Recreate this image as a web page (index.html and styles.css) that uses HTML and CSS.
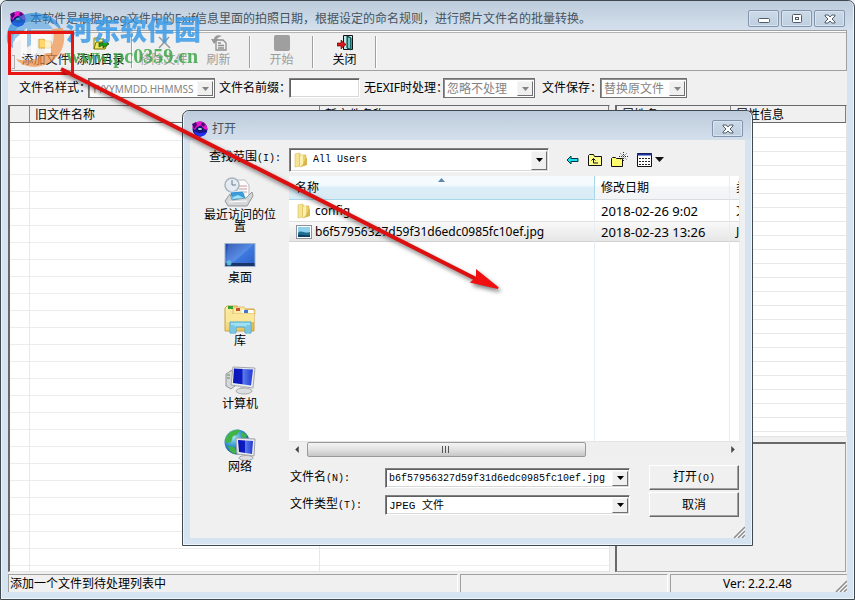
FILE: index.html
```html
<!DOCTYPE html>
<html lang="zh-CN">
<head>
<meta charset="utf-8">
<title>照片文件名批量转换</title>
<link rel="stylesheet" href="styles.css">
</head>
<body>
<svg class="defs" aria-hidden="true">
  <defs>
    <linearGradient id="screen" x1="0" y1="0" x2="1" y2="1"><stop offset="0" stop-color="#1c44a8"/><stop offset=".5" stop-color="#3f7be0"/><stop offset="1" stop-color="#2a5fc8"/></linearGradient>
    <linearGradient id="monitor" x1="0" y1="0" x2="1" y2="0"><stop offset="0" stop-color="#0a14b8"/><stop offset=".45" stop-color="#0c1cc0"/><stop offset=".5" stop-color="#5a7ae8"/><stop offset="1" stop-color="#2038d8"/></linearGradient>
    <linearGradient id="yellow" x1="0" y1="0" x2="1" y2="1"><stop offset="0" stop-color="#fdf3b0"/><stop offset="1" stop-color="#e3b94a"/></linearGradient>
    <radialGradient id="globe" cx=".35" cy=".3" r=".8"><stop offset="0" stop-color="#a6e8f4"/><stop offset=".5" stop-color="#2c8ccc"/><stop offset="1" stop-color="#0c3c88"/></radialGradient>
    <symbol id="app" viewBox="0 0 16 16">
      <circle cx="8" cy="8" r="7.500" fill="#1a1690"/>
      <path d="M.5 7C0 3 4 .5 8 .5S15 3 15.500 9L12 8 9 4.500 5 6 3 9z" fill="#ee14c8"/>
      <path d="M0 3l4-2 1 3-3 4zM10 1l3 2-1 3-3-2z" fill="#4a0a78"/>
      <path d="M2 10l4 2 5 0 4-1-2 3-5 2-4-2z" fill="#2430f0"/>
      <path d="M8 5l4 3-4 3-4-3z" fill="#111a5c"/>
      <path d="M6 8h4M8 7v2" stroke="#dff" stroke-width="1.200"/>
    </symbol>
    <symbol id="drop" viewBox="0 0 7 4"><path d="M0 0h7L3.500 4z" fill="currentColor"/></symbol>
    <symbol id="cross" viewBox="0 0 12 10"><path d="M1 1h3.200L6 3 7.800 1H11v1L8 5l3 3v1H7.800L6 7 4.200 9H1V8l3-3-3-3z" fill="#fff" stroke="#4e5b69"/></symbol>
    <symbol id="folder" viewBox="0 0 16 16">
      <path d="M2 2l5-1v13l-5 1z" fill="#f6e493" stroke="#d8bd55" stroke-width=".6"/>
      <path d="M7 3h6v10l-6 2z" fill="#ecd06b" stroke="#cfae45" stroke-width=".6"/>
      <path d="M7 4l3-2v10l-3 3z" fill="#fbf0b2"/><path d="M13 6h1v7l-5 1z" fill="#d9b64f"/>
    </symbol>
    <symbol id="grip" viewBox="0 0 12 12"><path d="M1 12L12 1M5 12l7-7M9 12l3-3" stroke="#8c8c8c" stroke-width="1.500"/><path d="M3 12l9-9M7 12l5-5M11 12l1-1" stroke="#fff"/></symbol>
  </defs>
</svg>

<main class="window">
  <header class="titlebar">
    <svg class="app-icon"><use href="#app"/></svg>
    <h1 class="caption">本软件是根据Jpeg文件中的Exif信息里面的拍照日期，根据设定的命名规则，进行照片文件名的批量转换。</h1>
    <div class="caption-buttons">
      <button class="cap" aria-label="最小化"><svg width="12" height="10" viewBox="0 0 12 10"><rect x=".5" y="4.500" width="11" height="4" rx="1" fill="#fff" stroke="#4e5b69"/></svg></button>
      <button class="cap" aria-label="最大化"><svg width="12" height="10" viewBox="0 0 12 10"><rect x="1.500" y=".5" width="9" height="8" rx="1" fill="#fff" stroke="#4e5b69"/><rect x="4.500" y="3.500" width="3" height="2" fill="#fff" stroke="#4e5b69"/></svg></button>
      <button class="cap" aria-label="关闭窗口"><svg width="12" height="10"><use href="#cross"/></svg></button>
    </div>
  </header>

  <div class="client">
    <nav class="toolbar" aria-label="工具栏">
      <span class="handle"></span>
      <button class="tool faint"><svg viewBox="0 0 16 16"><path d="M1 13V4h5l1 2h6v7z" fill="#ffd76a" stroke="#d9a63a"/></svg>添加文件</button>
      <button class="tool"><svg viewBox="0 0 16 16"><path d="M1 14V3h4l1 1h5v3" fill="#ffffa0" stroke="#8a8000"/><path d="M1 14l2-7h12l-3 7z" fill="#f0e860" stroke="#7a7000"/><path d="M6 8h4V5l6 4-6 4v-3l-4 2z" fill="#1fa01f" stroke="#064a06" stroke-width=".7"/></svg>添加目录</button>
      <span class="rule"></span>
      <button class="tool" disabled><svg viewBox="0 0 16 16"><path d="M3 2l11 11M13 2L3 13" stroke="#9a9a9a" stroke-width="1.500"/></svg>移除文件</button>
      <button class="tool" disabled><svg viewBox="0 0 16 16"><path d="M5 5h7l3 3v7H5zM7 8h3M7 10.500h6M7 13h6" fill="none" stroke="#8f8f8f" stroke-width="1.300"/><path d="M11 1C6-1 3 2 3 4H0l3 5 5-5H6c1-2 3-2 5-3z" fill="#979797"/></svg>刷新</button>
      <span class="rule"></span>
      <button class="tool" disabled><svg viewBox="0 0 16 16"><rect width="16" height="16" rx="2" fill="#9f9f9f"/></svg>开始</button>
      <span class="rule"></span>
      <button class="tool"><svg viewBox="0 0 16 16"><path d="M6.500 .5h9v14h-9z" fill="#bfe6e6" stroke="#111"/><path d="M10 1l4 2v12l-4-2z" fill="#2b8f8f" stroke="#063c3c"/><path d="M12 3v10" stroke="#b9ffff"/><path d="M0 8h4V5l5 4.500L4 14v-3H0z" fill="#e01515" stroke="#500" stroke-width=".6"/></svg>关闭</button>
      <span class="rule"></span>
    </nav>

    <form class="filters">
      <label for="style">文件名样式：</label>
      <span class="combo off"><select id="style" disabled><option>YYYYMMDD.HHMMSS</option></select><i class="arrow"><svg><use href="#drop"/></svg></i></span>
      <label for="prefix">文件名前缀：</label>
      <input id="prefix" class="field" type="text">
      <label for="noexif">无EXIF时处理：</label>
      <span class="combo off"><select id="noexif" disabled><option>忽略不处理</option></select><i class="arrow"><svg><use href="#drop"/></svg></i></span>
      <label for="save">文件保存：</label>
      <span class="combo off"><select id="save" disabled><option>替换原文件</option></select><i class="arrow"><svg><use href="#drop"/></svg></i></span>
    </form>

    <div class="panes">
      <section class="sheet files">
        <table class="grid"><colgroup><col class="c-mark"><col class="c-old"><col></colgroup>
          <thead><tr><th></th><th>旧文件名称</th><th>新文件名称</th></tr></thead></table>
        <div class="lines wide"></div>
      </section>
      <div class="side">
        <section class="sheet props">
          <table class="grid"><colgroup><col class="c-prop"><col></colgroup>
            <thead><tr><th>属性名</th><th>属性信息</th></tr></thead></table>
          <div class="lines tight"></div>
        </section>
        <section class="preview"></section>
      </div>
    </div>

    <footer class="status">
      <span>添加一个文件到待处理列表中</span>
      <span></span>
      <span class="version">Ver: 2.2.2.48<svg class="grip"><use href="#grip"/></svg></span>
    </footer>
  </div>
</main>

<section class="dialog" role="dialog" aria-labelledby="dlg-title">
  <header class="titlebar">
    <svg class="app-icon"><use href="#app"/></svg>
    <h2 class="caption" id="dlg-title">打开</h2>
    <div class="caption-buttons"><button class="cap" aria-label="关闭对话框"><svg width="12" height="10"><use href="#cross"/></svg></button></div>
  </header>
  <div class="dialog-body">
    <div class="lookup">
      <label for="where">查找范围<span class="mono">(I):</span></label>
      <span class="combo tall"><svg class="small-icon"><use href="#folder"/></svg><select id="where" class="mono"><option>All Users</option></select><i class="arrow"><svg><use href="#drop"/></svg></i></span>
      <div class="nav">
        <button aria-label="后退"><svg width="13" height="16" viewBox="0 0 13 16"><path d="M1 8l4-4v2.500h7v3H5V12z" fill="#19e0e8" stroke="#07343c"/></svg></button>
        <button aria-label="向上一级"><svg width="16" height="16" viewBox="0 0 16 16"><path d="M1.500 13.500v-10l1-1h4l1 2h7v9z" fill="#ffff8c" stroke="#111"/><path d="M11 11H6.500V7M4.500 8.500l2-2 2 2" fill="none" stroke="#111"/></svg></button>
        <button aria-label="新建文件夹"><svg width="17" height="16" viewBox="0 0 17 16"><path d="M.5 14.500v-8l1-1h3l1 1h6v8z" fill="#ffff70" stroke="#111"/><path d="M12.500 0v9M8 4.500h9M9.500 1.500l6 6M15.500 1.500l-6 6" stroke="#333" stroke-dasharray="1 1"/></svg></button>
        <button aria-label="查看菜单"><svg width="28" height="16" viewBox="0 0 28 16"><path d="M1.500 1.500h14v13h-14z" fill="#fff" stroke="#111"/><path d="M1 2.500h15" stroke="#1830a0" stroke-width="2"/><path d="M3 6.500h11M3 9.500h11M3 12.500h11" stroke="#222" stroke-dasharray="2 1"/><path d="M19 5h9l-4.500 5z" fill="#111"/></svg></button>
      </div>
    </div>

    <nav class="places" aria-label="位置">
      <button><svg viewBox="0 0 32 32"><path d="M11 3h10l4 5v14H11z" fill="#fbfbfb" stroke="#b9bec4"/><path d="M15 9h8M15 12h8M15 15h8" stroke="#c99"/><circle cx="8" cy="8" r="7" fill="#e4ebf2" stroke="#a8b4bf" stroke-width="1.500"/><path d="M8 3v5h4" fill="none" stroke="#6a7d90"/><path d="M6 15l13-1 3 8-14 3z" fill="#2f8ed0" stroke="#dceaf4"/><path d="M7 20l6-3 8 4-13 4z" fill="#7ed2f0"/><path d="M1 24l5-7 2 6 14-2 6-6 1 4-6 10H4z" fill="#d5d6d8" stroke="#98999b"/><path d="M8 16l11-1 2 6-12 2z" fill="#3c9cd8"/><path d="M9 20l5-2 6 3-11 1z" fill="#9fe2f4"/><path d="M5 25l18-1" stroke="#fff"/></svg>最近访问的位置</button>
      <button><svg viewBox="0 0 32 32"><rect x="1" y="3.500" width="30" height="23" fill="url(#screen)" stroke="#9cb2cf"/><path d="M1.500 23h29v3h-29z" fill="#1c3568"/><circle cx="5" cy="23" r="2.500" fill="#58b9d8"/><path d="M4 4h26L10 22H2z" fill="#fff" opacity=".13"/></svg>桌面</button>
      <button><svg viewBox="0 0 32 32"><path d="M1 28V5l2-2h10l2 3h15v22z" fill="url(#yellow)" stroke="#cfa23c"/><path d="M9 6l2-2h9l2 3h9v4H9z" fill="#fbe9a4" stroke="#d8ae4f" stroke-width=".7"/><path d="M4 3h5v3H4z" fill="#34a334"/><path d="M12 5h4v3h-4z" fill="#c8502c"/><path d="M18 7h11v3H18z" fill="#fff"/><path d="M20 7h4v3h-4z" fill="#3c78c8"/><path d="M2 11h28v8H2z" fill="#fbe79a"/><path d="M6 30V19h21v11h-6v-6h-9v6z" fill="#9fe0f4" stroke="#4aa5cc"/><path d="M8 22v7M10 22v7M23 22v7M25 22v7" stroke="#58aed0"/></svg>库</button>
      <button><svg viewBox="0 0 32 32"><path d="M2 8l6-4 3 16-4 3-5-3z" fill="#d6d8da" stroke="#929598"/><path d="M3 9h3M3 12h3" stroke="#5b8f3b"/><path d="M9 1l22 1-2 20-22-3z" fill="#e9ebed" stroke="#a4a8ac"/><path d="M10 2.500l19 1-2 16-18-2.500z" fill="url(#monitor)"/><path d="M16 20h5l2 4h-6z" fill="#bfc2c6"/><ellipse cx="20" cy="25" rx="8" ry="3" fill="#dcdee0" stroke="#a9acaf"/></svg>计算机</button>
      <button><svg viewBox="0 0 32 32"><circle cx="13" cy="13" r="12.500" fill="url(#globe)"/><path d="M4 5c4-4 9-5 12-4l-3 5-4 1-2 6-6 1c0-4 1-6 3-9zM4 17l6 1 3 5-2 2c-4-1-6-4-7-8zM18 3l5 3-1 3-5-1z" fill="#42b344"/><path d="M12 9l19 1-1 17-17-2z" fill="#e8eaec" stroke="#9fa3a8"/><path d="M14 11l15 1-1 13-13-2z" fill="url(#monitor)"/><ellipse cx="22" cy="29" rx="7" ry="2.500" fill="#dcdee0" stroke="#a4a8ac"/></svg>网络</button>
    </nav>

    <div class="browser">
      <div class="listing">
        <table class="entries">
          <colgroup><col class="c-name"><col class="c-date"><col></colgroup>
          <thead><tr><th class="sorted">名称<svg class="sort" viewBox="0 0 7 4"><path d="M0 4h7L3.500 0z" fill="#5f86a8"/></svg></th><th>修改日期</th><th>类型</th></tr></thead>
          <tbody>
            <tr><td><span class="entry"><svg class="small-icon"><use href="#folder"/></svg>config</span></td><td class="date">2018-02-26 9:02</td><td>文件夹</td></tr>
            <tr class="selected"><td><span class="entry"><svg class="small-icon" viewBox="0 0 16 16"><rect x=".5" y="1.500" width="15" height="13" fill="#fff" stroke="#8b9299"/><path d="M2 3h12v10H2z" fill="#8fd0ee"/><path d="M2 9c3-4 6 1 12-1v5H2z" fill="#1f6f8f"/><path d="M2 11c4-1 7 1 12 0v2H2z" fill="#0d3c66"/></svg>b6f57956327d59f31d6edc0985fc10ef.jpg</span></td><td class="date">2018-02-23 13:26</td><td>JPEG 图像</td></tr>
            <tr class="rest"><td></td><td></td><td></td></tr>
          </tbody>
        </table>
        <div class="scroll">
          <svg viewBox="0 0 4 8"><path d="M4 0v8L0 4z" fill="#444"/></svg>
          <div class="track"><span class="thumb"><i></i><i></i><i></i></span></div>
          <svg viewBox="0 0 4 8"><path d="M0 0v8l4-4z" fill="#444"/></svg>
        </div>
      </div>
      <div class="answer">
        <label for="fname">文件名<span class="mono">(N):</span></label>
        <span class="combo"><input id="fname" class="mono" type="text" value="b6f57956327d59f31d6edc0985fc10ef.jpg"><i class="arrow"><svg><use href="#drop"/></svg></i></span>
        <button class="push">打开<span class="mono">(O)</span></button>
        <label for="ftype">文件类型<span class="mono">(T):</span></label>
        <span class="combo"><select id="ftype" class="mixed"><option>JPEG 文件</option></select><i class="arrow"><svg><use href="#drop"/></svg></i></span>
        <button class="push">取消</button>
      </div>
    </div>
    <svg class="grip"><use href="#grip"/></svg>
  </div>
</section>

<div class="watermark">
  <svg class="mark-logo" viewBox="0 0 60 56">
    <path d="M1 29C-1 12 12 1 28 1c14 0 26 7 28 19C48 9 36 6 26 9 12 12 5 20 7 36 3 34 1 32 1 29z" fill="#1d86dc"/>
    <path d="M57 16c5 20-6 37-28 39-9 0-16-4-19-8 16 4 33-2 37-17 1-5 1-9-1-13z" fill="#f08a3c"/>
    <path d="M5 34C5 20 14 11 28 9c8-1 15 2 19 8H25v16l-8 5V21L8 29z" fill="#3a96e2" opacity=".75"/>
    <path d="M9 27l12-11v28h-6V27l-6 4zM25 21h20v20h-6V27h-8v17h-6z" fill="#fff"/>
  </svg>
  <div class="mark-text"><span class="mark-name">河东软件园</span><span class="mark-url">www.pc0359.cn</span></div>
</div>

<svg class="callout" viewBox="0 0 855 600" width="855" height="600" aria-hidden="true">
  <rect x="9.500" y="32.500" width="63" height="41" fill="none" stroke="#e81414" stroke-width="3"/>
  <g class="pointer"><path d="M61 69L478 280" stroke="#dc1010" stroke-width="4"/><path d="M498 288l-26-6 5-4 0-7z" fill="#f01010" stroke="#f01010" stroke-width="2"/></g>
</svg>
</body>
</html>
```

FILE: styles.css
```css
* { box-sizing: border-box; }
body {
  margin: 0;
  background: #eef1f4;
  font: 12px/16px "Noto Sans", "Noto Sans CJK SC", sans-serif;
  color: #000;
  overflow: hidden;
}
button, input, select { font: inherit; color: inherit; margin: 0; padding: 0; border: 0; background: none; border-radius: 0; }
svg { display: block; flex: none; }
.defs { position: absolute; width: 0; height: 0; }
.mono { font-family: "Liberation Mono", "Noto Sans CJK SC", monospace; font-size: 10px; }
.mixed { font-family: "Liberation Mono", "Noto Sans CJK SC", monospace; font-size: 11px; }

/* window frames */
.window, .dialog {
  display: flex;
  flex-direction: column;
  border: 1px solid #404850;
  border-radius: 7px 7px 0 0;
  background: #d6e3f0;
  box-shadow: inset 0 0 0 1px #edf4fa;
}
.window { height: 100vh; padding: 0 7px 7px; }
.titlebar {
  display: flex;
  align-items: center;
  height: 29px;
  margin: 0 -6px;
  padding: 6px 8px 0;
  gap: 4px;
  border-radius: 6px 6px 0 0;
  background: linear-gradient(#bccbdb, #d4e0ec);
}
.app-icon { width: 16px; height: 16px; }
.caption { flex: 1; margin: 0; font-size: 12px; font-weight: normal; color: #46535f; white-space: nowrap; }
.caption-buttons { display: flex; gap: 2px; }
.cap {
  display: grid;
  place-items: center;
  width: 31px;
  height: 17px;
  border: 1px solid #8295ac;
  border-radius: 2px;
  background: linear-gradient(#cbd9e7, #bfcfe0);
  box-shadow: inset 0 0 0 1px #d8e4ef;
}
.client { flex: 1; display: flex; flex-direction: column; min-height: 0; background: #f0f0f0; }

/* toolbar */
.toolbar {
  display: flex;
  align-items: center;
  height: 41px;
  padding: 2px 4px 0;
  border: 1px solid #a0a0a0;
  border-left: 0;
  box-shadow: inset 0 1px #fff, inset 0 2px #b4b4b4;
}
.handle { align-self: flex-end; width: 3px; height: 14px; margin: 0 3px 1px 0; border: 1px solid #b0b0b0; border-left: 0; }
.tool { display: flex; flex-direction: column; align-items: center; gap: 1px; width: 55px; white-space: nowrap; }
.tool svg { width: 16px; height: 16px; }
.tool:disabled { color: #9c9c9c; }
.faint { color: #222; }
.rule { width: 1px; height: 32px; margin: 0 4px 0 3px; background: #a0a0a0; box-shadow: 1px 0 #fff; }

/* naming options */
.filters {
  display: grid;
  grid-template-columns: 76px 127px 74px 71px 83px 92px 65px 87px;
  align-items: center;
  height: 34px;
  padding-left: 4px;
}
.filters label { padding-left: 4px; white-space: nowrap; }
.filters label:first-child, .filters label:last-of-type { padding-left: 7px; }
.combo, .field {
  height: 20px;
  border: 1px solid;
  border-color: #808080 #fff #fff #808080;
  background: #fff;
  box-shadow: inset 1px 1px #606060, inset -1px -1px #d8d8d8;
}
.field { width: 100%; padding: 0 3px; }
.combo { display: flex; align-items: center; min-width: 0; padding: 2px 1px 1px 3px; }
.combo select, .combo input { flex: 1; min-width: 0; height: 100%; appearance: none; outline: 0; line-height: 16px; }
.arrow {
  display: grid;
  place-items: center;
  flex: none;
  width: 16px;
  height: 100%;
  background: #f0f0f0;
  border: 1px solid;
  border-color: #f8f8f8 #707070 #707070 #f8f8f8;
}
.arrow svg { width: 7px; height: 4px; }
.off { color: #848484; box-shadow: inset 1px 1px #909090; border-color: #707070; }
.off select { opacity: 1; color: #848484; }
.off #style { font-size: 10px; }

/* data panes */
.panes { flex: 1; display: flex; gap: 5px; min-height: 0; padding: 0 0 2px; }
.files { flex: 0 0 602px; }
.side { flex: 1; display: flex; flex-direction: column; gap: 5px; min-width: 0; }
.sheet { display: flex; flex-direction: column; border: 1px solid #808080; border-color: #696969 #e4e4e4 #e4e4e4 #696969; border-left-width: 2px; background: #fff; overflow: hidden; }
.props { flex: 334 0 0; }
.preview { flex: 129 0 0; border: 2px solid #696969; border-right: 1px solid #a0a0a0; border-bottom: 1px solid #a0a0a0; margin-right: 1px; }
.grid, .entries { width: 100%; border-collapse: separate; border-spacing: 0; table-layout: fixed; }
.grid th {
  height: 17px;
  padding: 1px 0 0 5px;
  line-height: 15px;
  text-align: left;
  font-weight: normal;
  background: #f0f0f0;
  border-right: 1px solid #808080;
  border-bottom: 1px solid #696969;
}
.c-mark { width: 20px; }
.c-old { width: 290px; }
.c-prop { width: 114px; }
.lines { flex: 1; }
.wide {
  background:
    linear-gradient(#e8e8e8, #e8e8e8) 19px 0 / 1px 100% no-repeat,
    linear-gradient(#e8e8e8, #e8e8e8) 309px 0 / 1px 100% no-repeat,
    repeating-linear-gradient(#fff 0 16px, #ececec 16px 17px) 0 1px;
}
.tight { background: repeating-linear-gradient(#fff 0 13px, #e8e8e8 13px 14px) 0 1px; }

/* status bar */
.status { display: grid; grid-template-columns: 450px 208px 1fr; gap: 2px; height: 18px; }
.status span { border-top: 1px solid #a0a0a0; border-left: 1px solid #a0a0a0; border-right: 1px solid #fff; padding-left: 1px; line-height: 17px; white-space: nowrap; }
.status .version { display: flex; justify-content: space-between; align-items: flex-end; padding-left: 52px; border-right: 0; }
.grip { width: 12px; height: 12px; }

/* open-file dialog, floating over the main window */
.dialog { position: absolute; left: 182px; top: 110px; width: 571px; height: 436px; padding: 0 7px 7px; }
.dialog-body {
  flex: 1;
  display: grid;
  grid-template-columns: 99px 1fr;
  grid-template-rows: 36px 1fr;
  padding-right: 5px;
  background: #f0f0f0;
  position: relative;
}
.dialog-body > .grip { position: absolute; right: 0; bottom: 0; }
.lookup { grid-column: 1 / -1; display: grid; grid-template-columns: 99px 260px 1fr; align-items: center; padding-top: 3px; }
.lookup label { padding: 0 0 4px 19px; white-space: nowrap; }
.tall { height: 24px; gap: 4px; }
.small-icon { width: 16px; height: 16px; }
.nav { display: flex; gap: 8px; padding-left: 17px; }
.nav button { display: block; }
.places { display: flex; flex-direction: column; padding-top: 1px; }
.places button { display: flex; flex-direction: column; align-items: center; width: 76px; height: 63px; margin-left: 12px; line-height: 12px; }
.places svg { width: 32px; height: 32px; }

.browser { display: flex; flex-direction: column; min-width: 0; }
.listing { display: flex; flex-direction: column; height: 281px; background: #fff; }
.entries { flex: 1; height: 265px; }
.c-name { width: 306px; }
.c-date { width: 135px; }
.entries th, .entries td { overflow: hidden; white-space: nowrap; text-align: left; font-weight: normal; padding: 0 0 0 6px; border-right: 1px solid #e8edf2; }
.entries th { height: 24px; background: linear-gradient(#fff 40%, #f4f6f8 50%, #f2f4f6); border-bottom: 1px solid #d8dde2; position: relative; }
.entries .sorted { background: linear-gradient(#f4fafe 40%, #dceef8 50%, #d8ecf6); border-color: #a8d6ea; }
.sort { position: absolute; left: 149px; top: 2px; width: 7px; height: 4px; }
.entries td { height: 21px; }
.entries td:first-child { padding-left: 7px; }
.entries .rest td { height: auto; }
.entry { display: flex; align-items: center; gap: 3px; }
.entries .date { font-size: 13px; }
.selected td { background: linear-gradient(#f9f9f9, #e6e6e6); border-top: 1px solid #e0e0e0; border-bottom: 1px solid #d2d2d2; }
.scroll { display: flex; align-items: center; gap: 8px; height: 16px; padding: 0 5px 0 6px; background: #efefef; border-top: 1px solid #e4e4e4; }
.scroll svg { width: 4px; height: 7px; }
.track { flex: 1; height: 15px; }
.thumb { display: flex; justify-content: center; align-items: center; gap: 1px; width: 67%; height: 15px; border: 1px solid #999; border-radius: 2px; background: linear-gradient(#f4f4f4, #e2e2e2 50%, #c6c6c6); }
.thumb i { width: 2px; height: 7px; border-left: 1px solid #555; }

.answer { display: grid; grid-template-columns: 96px 245px 109px; row-gap: 2px; align-items: center; justify-content: start; padding-top: 8px; }
.answer label { padding-left: 1px; white-space: nowrap; }
.push {
  height: 25px;
  margin-left: 19px;
  border: 1px solid;
  border-color: #fff #696969 #696969 #fff;
  box-shadow: inset -1px -1px #a0a0a0;
  background: #f0f0f0;
}

/* overlays */
.watermark { position: absolute; left: 6px; top: 10px; display: flex; opacity: .85; pointer-events: none; }
.mark-logo { width: 60px; height: 56px; margin-top: 2px; opacity: .75; }
.mark-text { display: flex; flex-direction: column; }
.mark-name { font: 900 27px/38px "Noto Sans CJK SC", sans-serif; color: #3c9ce8; }
.mark-url { font: bold 20px/16px "Liberation Serif", serif; color: #3fa84b; }
.callout { position: absolute; left: 0; top: 0; pointer-events: none; }
.pointer { filter: drop-shadow(2px 3px 2px rgba(0, 0, 0, .5)); }
```
